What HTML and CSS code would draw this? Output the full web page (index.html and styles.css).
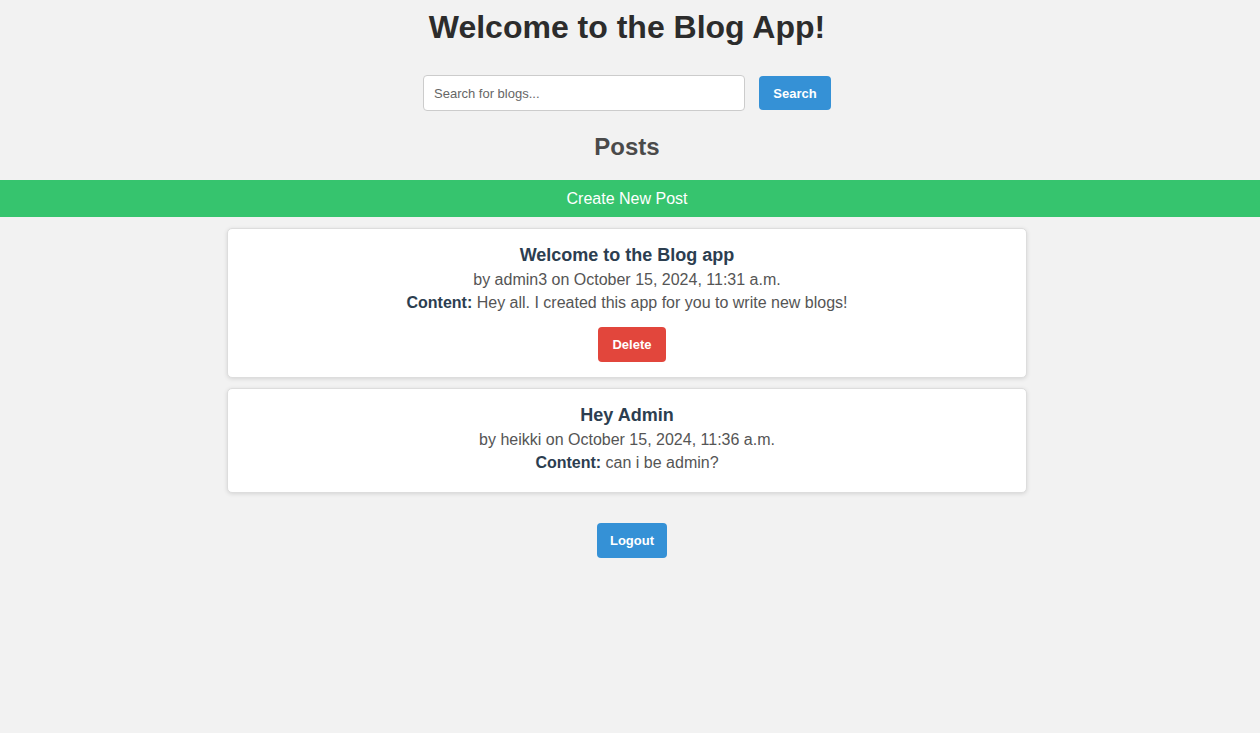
FILE: index.html
```html
<!DOCTYPE html>
<html lang="en">
<head>
<meta charset="utf-8">
<title>Blog App</title>
<link rel="stylesheet" href="styles.css">
</head>
<body>
  <h1 class="page-title">Welcome to the Blog App!</h1>
  <form class="search-form" onsubmit="return false;">
    <input class="search-input" type="text" placeholder="Search for blogs...">
    <button class="btn btn-blue search-btn" type="submit">Search</button>
  </form>
  <h2 class="section-title">Posts</h2>
  <a class="create-bar" href="#">Create New Post</a>
  <div class="posts">
    <div class="post-card">
      <h3 class="post-title">Welcome to the Blog app</h3>
      <p class="post-meta">by admin3 on October 15, 2024, 11:31 a.m.</p>
      <p class="post-content"><strong>Content:</strong> Hey all. I created this app for you to write new blogs!</p>
      <button class="btn btn-red delete-btn">Delete</button>
    </div>
    <div class="post-card">
      <h3 class="post-title">Hey Admin</h3>
      <p class="post-meta">by heikki on October 15, 2024, 11:36 a.m.</p>
      <p class="post-content last"><strong>Content:</strong> can i be admin?</p>
    </div>
  </div>
  <div class="logout-row">
    <button class="btn btn-blue logout-btn">Logout</button>
  </div>
</body>
</html>
```
FILE: styles.css
```css
* { box-sizing: border-box; }
html, body { margin: 0; padding: 0; }
body {
  background: #f2f2f2;
  font-family: "Liberation Sans", Arial, Helvetica, sans-serif;
  color: #555;
  min-height: 733px;
  padding-right: 6px;
}
.page-title {
  margin: 0;
  padding-top: 9px;
  font-size: 32px;
  line-height: 37px;
  font-weight: bold;
  color: #2c2c2c;
  text-align: center;
}
.search-form {
  display: flex;
  justify-content: center;
  align-items: center;
  gap: 14px;
  margin-top: 29px;
}
.search-input {
  width: 322px;
  height: 36px;
  border: 1px solid #ccc;
  border-radius: 4px;
  padding: 0 10px;
  font-family: inherit;
  font-size: 13px;
  background: #fff;
  color: #333;
  outline: none;
}
.search-input::placeholder { color: #666; }
.btn {
  border: none;
  border-radius: 4px;
  color: #fff;
  font-family: inherit;
  font-size: 13px;
  font-weight: bold;
  cursor: pointer;
  padding: 0;
}
.btn-blue { background: #3591d6; }
.btn-red { background: #e2463c; }
.search-btn { width: 72px; height: 34px; }
.section-title {
  margin: 22px 0 0;
  font-size: 24px;
  line-height: 28px;
  font-weight: bold;
  color: #4a4a4a;
  text-align: center;
}
.create-bar {
  display: block;
  margin-top: 19px;
  margin-right: -6px;
  padding-right: 6px;
  height: 37px;
  line-height: 37px;
  background: #36c46e;
  color: #fff;
  font-size: 16px;
  text-align: center;
  text-decoration: none;
}
.posts {
  width: 800px;
  margin: 11px auto 0;
  display: flex;
  flex-direction: column;
  gap: 10px;
}
.post-card {
  background: #fff;
  border: 1px solid #ddd;
  border-radius: 5px;
  box-shadow: 0 1px 4px rgba(0,0,0,0.12);
  padding: 15px 20px 15px;
  text-align: center;
}
.post-title {
  margin: 0 0 2px;
  font-size: 18px;
  line-height: 22px;
  font-weight: bold;
  color: #2c3e50;
}
.post-meta, .post-content {
  margin: 0;
  font-size: 16px;
  line-height: 23px;
  color: #555;
}
.post-content strong { color: #2c3e50; }
.post-content.last { margin-bottom: 3px; }
.delete-btn {
  margin-top: 13px;
  margin-left: 10px;
  width: 68px;
  height: 35px;
}
.logout-row {
  display: flex;
  justify-content: center;
  margin-top: 30px;
  padding-left: 10px;
}
.logout-btn { width: 70px; height: 35px; }
```
